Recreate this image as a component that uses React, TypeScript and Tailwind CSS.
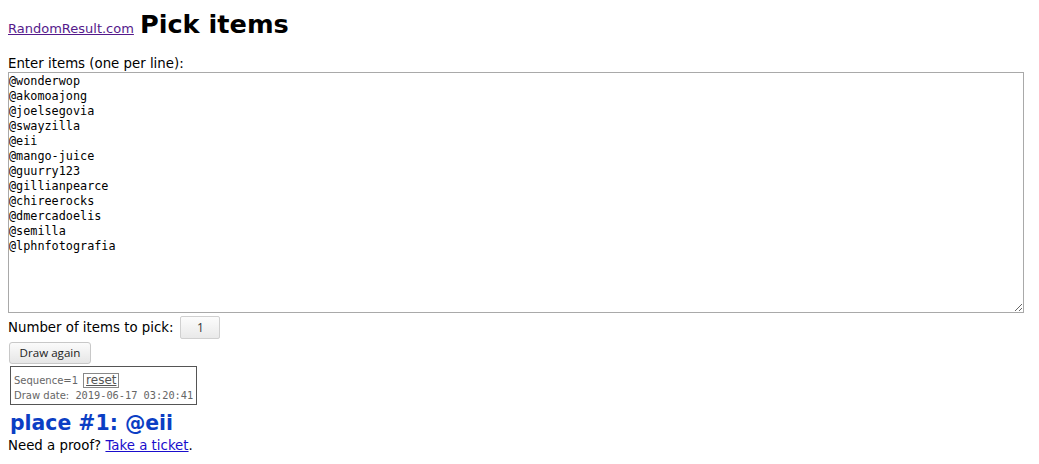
import React from "react";

const items = [
  "@wonderwop",
  "@akomoajong",
  "@joelsegovia",
  "@swayzilla",
  "@eii",
  "@mango-juice",
  "@guurry123",
  "@gillianpearce",
  "@chireerocks",
  "@dmercadoelis",
  "@semilla",
  "@lphnfotografia",
].join("\n");

export default function App() {
  return (
    <div className="min-h-[464px] w-[1039px] bg-white px-[8px] text-[13.33px] text-black [font-family:'DejaVu_Sans',sans-serif]">
      <div className="mt-[8px] flex h-[32px] items-baseline gap-[6px] leading-[32px]">
        <a href="#" className="text-[13px] text-[#551a8b] underline">RandomResult.com</a>
        <h1 className="text-[25.6px] font-bold">Pick items</h1>
      </div>
      <label className="mt-[16px] block h-[15px] leading-[15px]">Enter items (one per line):</label>
      <textarea
        className="mt-[1px] block h-[241px] w-[1016px] resize border border-[#a9a9a9] px-0 py-[1px] text-[11.8px] leading-[15px] outline-none [font-family:'DejaVu_Sans_Mono',monospace]"
        defaultValue={items}
      />
      <div className="mt-[3px] flex h-[23px] items-center gap-[7px]">
        <span>Number of items to pick:</span>
        <div className="flex h-[23px] w-[40px] items-center justify-center rounded-[2px] border border-[#d0d0d0] bg-gradient-to-b from-[#fcfcfc] to-[#e9e9e9] text-[12px] text-[#333] [font-family:'Open_Sans',sans-serif]">
          1
        </div>
      </div>
      <button className="ml-[1px] mt-[3px] flex h-[22px] w-[82px] items-center justify-center rounded-[3px] border border-[#c8c8c8] bg-gradient-to-b from-[#fbfbfb] to-[#e6e6e6] text-[11.6px] text-[#222] [font-family:'Open_Sans',sans-serif]">
        Draw again
      </button>
      <div className="ml-[2px] mt-[2px] w-fit border border-[#555] px-[3px] pb-[2px] pt-[5px] text-[10px] text-[#666]">
        <div className="flex h-[16px] items-center gap-[5px]">
          <span>Sequence=1</span>
          <span className="flex h-[15px] items-center border border-[#888] px-[2px] text-[12px] leading-[13px] text-[#555] underline">reset</span>
        </div>
        <div className="h-[14px] whitespace-nowrap leading-[14px]">
          Draw date:<span className="text-[10.3px] [font-family:'DejaVu_Sans_Mono',monospace]"> 2019-06-17 03:20:41</span>
        </div>
      </div>
      <div className="ml-[2px] mt-[6px] text-[20.4px] font-bold leading-[24px] text-[#0b3ec4]">place #1: @eii</div>
      <div className="mt-[3px] leading-[16px]">
        Need a proof? <a href="#" className="text-[#1a0dcc] underline">Take a ticket</a>.
      </div>
    </div>
  );
}
